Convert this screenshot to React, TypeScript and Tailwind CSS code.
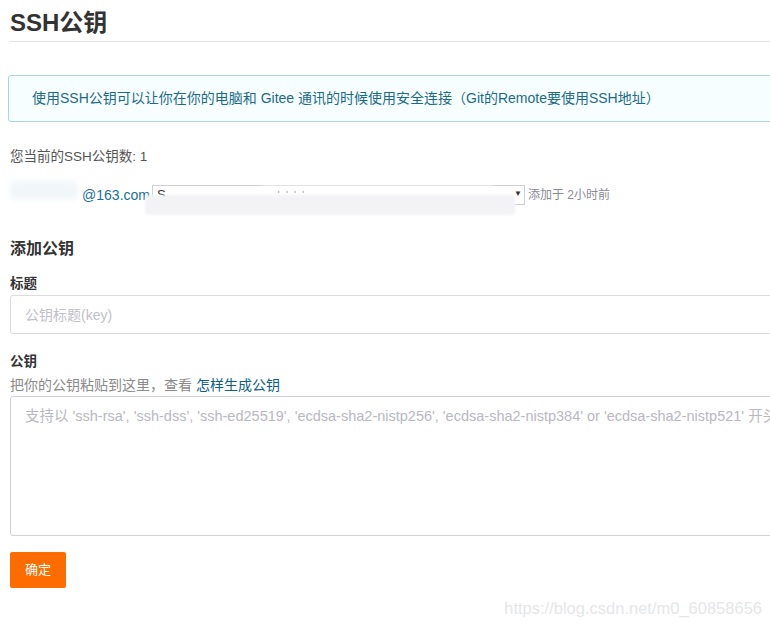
// SSH key settings page — Gitee style
const font = "font-['Liberation_Sans','Noto_Sans_CJK_SC',sans-serif]";

function KeyRow() {
  return (
    <div className="relative mt-[18px] flex h-[22px] items-center">
      {/* redacted email */}
      <div className="relative w-[140px] text-right">
        <span className="text-[14px] leading-none text-[#1a6f93]">@163.com</span>
        <div className="absolute left-0 top-[-2px] h-[18px] w-[68px] bg-[#f0f6fa] blur-[3px]" />
      </div>
      <div className="relative ml-[2px] flex h-[20px] w-[373px] items-center border border-[#cfcfd6] bg-white pl-[4px] text-[13px] text-[#333]">
        S
        <span className="ml-[112px] text-[9px] tracking-[2px] text-[#888]">' ' ' '</span>
        <span className="absolute right-[2px] top-[2px] text-[8px] text-[#333]">▼</span>
        <div className="absolute left-[-8px] top-[9px] h-[20px] w-[370px] rounded-sm bg-[#f3f3f6] blur-[1px]" />
        <div className="absolute left-[110px] top-[-9px] h-[8px] w-[230px] bg-white blur-[2px]" />
      </div>
      <span className="ml-[3px] text-[12px] text-[#8a8a94]">添加于 2小时前</span>
    </div>
  );
}

export default function App() {
  return (
    <div className={`${font} h-[627px] w-[770px] overflow-hidden bg-white`}>
      <div className="w-[820px] pl-[10px] pt-[7px]">
        <h1 className="text-[24px] font-bold leading-[32px] text-[#333]">SSH公钥</h1>
        <div className="mt-[2px] h-px bg-[#e3e3e3]" />

        <div className="ml-[-2px] mt-[33px] flex h-[47px] items-center rounded-[3px] border border-[#a9d6e3] bg-[#f6feff] pl-[23px] text-[14px] text-[#1c6b86]">
          使用SSH公钥可以让你在你的电脑和 Gitee 通讯的时候使用安全连接（Git的Remote要使用SSH地址）
        </div>

        <p className="mt-[26px] text-[13.5px] leading-[18px] text-[#555]">您当前的SSH公钥数: 1</p>

        <KeyRow />

        <h2 className="mt-[32px] text-[16px] font-bold leading-[22px] text-[#333]">添加公钥</h2>

        <label className="mt-[15px] block text-[13.5px] font-bold leading-[18px] text-[#333]">标题</label>
        <input
          placeholder="公钥标题(key)"
          className="mt-[2px] h-[39px] w-full rounded-[3px] border border-[#dcdce0] px-[14px] text-[14px] text-[#333] outline-none placeholder:text-[#c0c0c6]"
        />

        <label className="mt-[19px] block text-[13.5px] font-bold leading-[18px] text-[#333]">公钥</label>
        <p className="mt-[5px] text-[14px] leading-[18px] text-[#8a8a8a]">
          把你的公钥粘贴到这里，查看 <a className="text-[#0c5f84]">怎样生成公钥</a>
        </p>
        <textarea
          placeholder="支持以 'ssh-rsa', 'ssh-dss', 'ssh-ed25519', 'ecdsa-sha2-nistp256', 'ecdsa-sha2-nistp384' or 'ecdsa-sha2-nistp521' 开头"
          className="mt-[2px] block h-[140px] w-full resize-none rounded-[3px] border border-[#d0d0da] px-[14px] py-[10px] text-[14.5px] leading-[18px] text-[#333] outline-none placeholder:whitespace-nowrap placeholder:text-[#b8b8c0]"
        />

        <button className="mt-[16px] h-[36px] w-[56px] rounded-[2px] bg-[#fe6c00] text-[13px] text-white">确定</button>
      </div>
      <div className="mt-[8px] pr-[8px] text-right text-[16.5px] text-[#e6e6e8]">
        https://blog.csdn.net/m0_60858656
      </div>
    </div>
  );
}
